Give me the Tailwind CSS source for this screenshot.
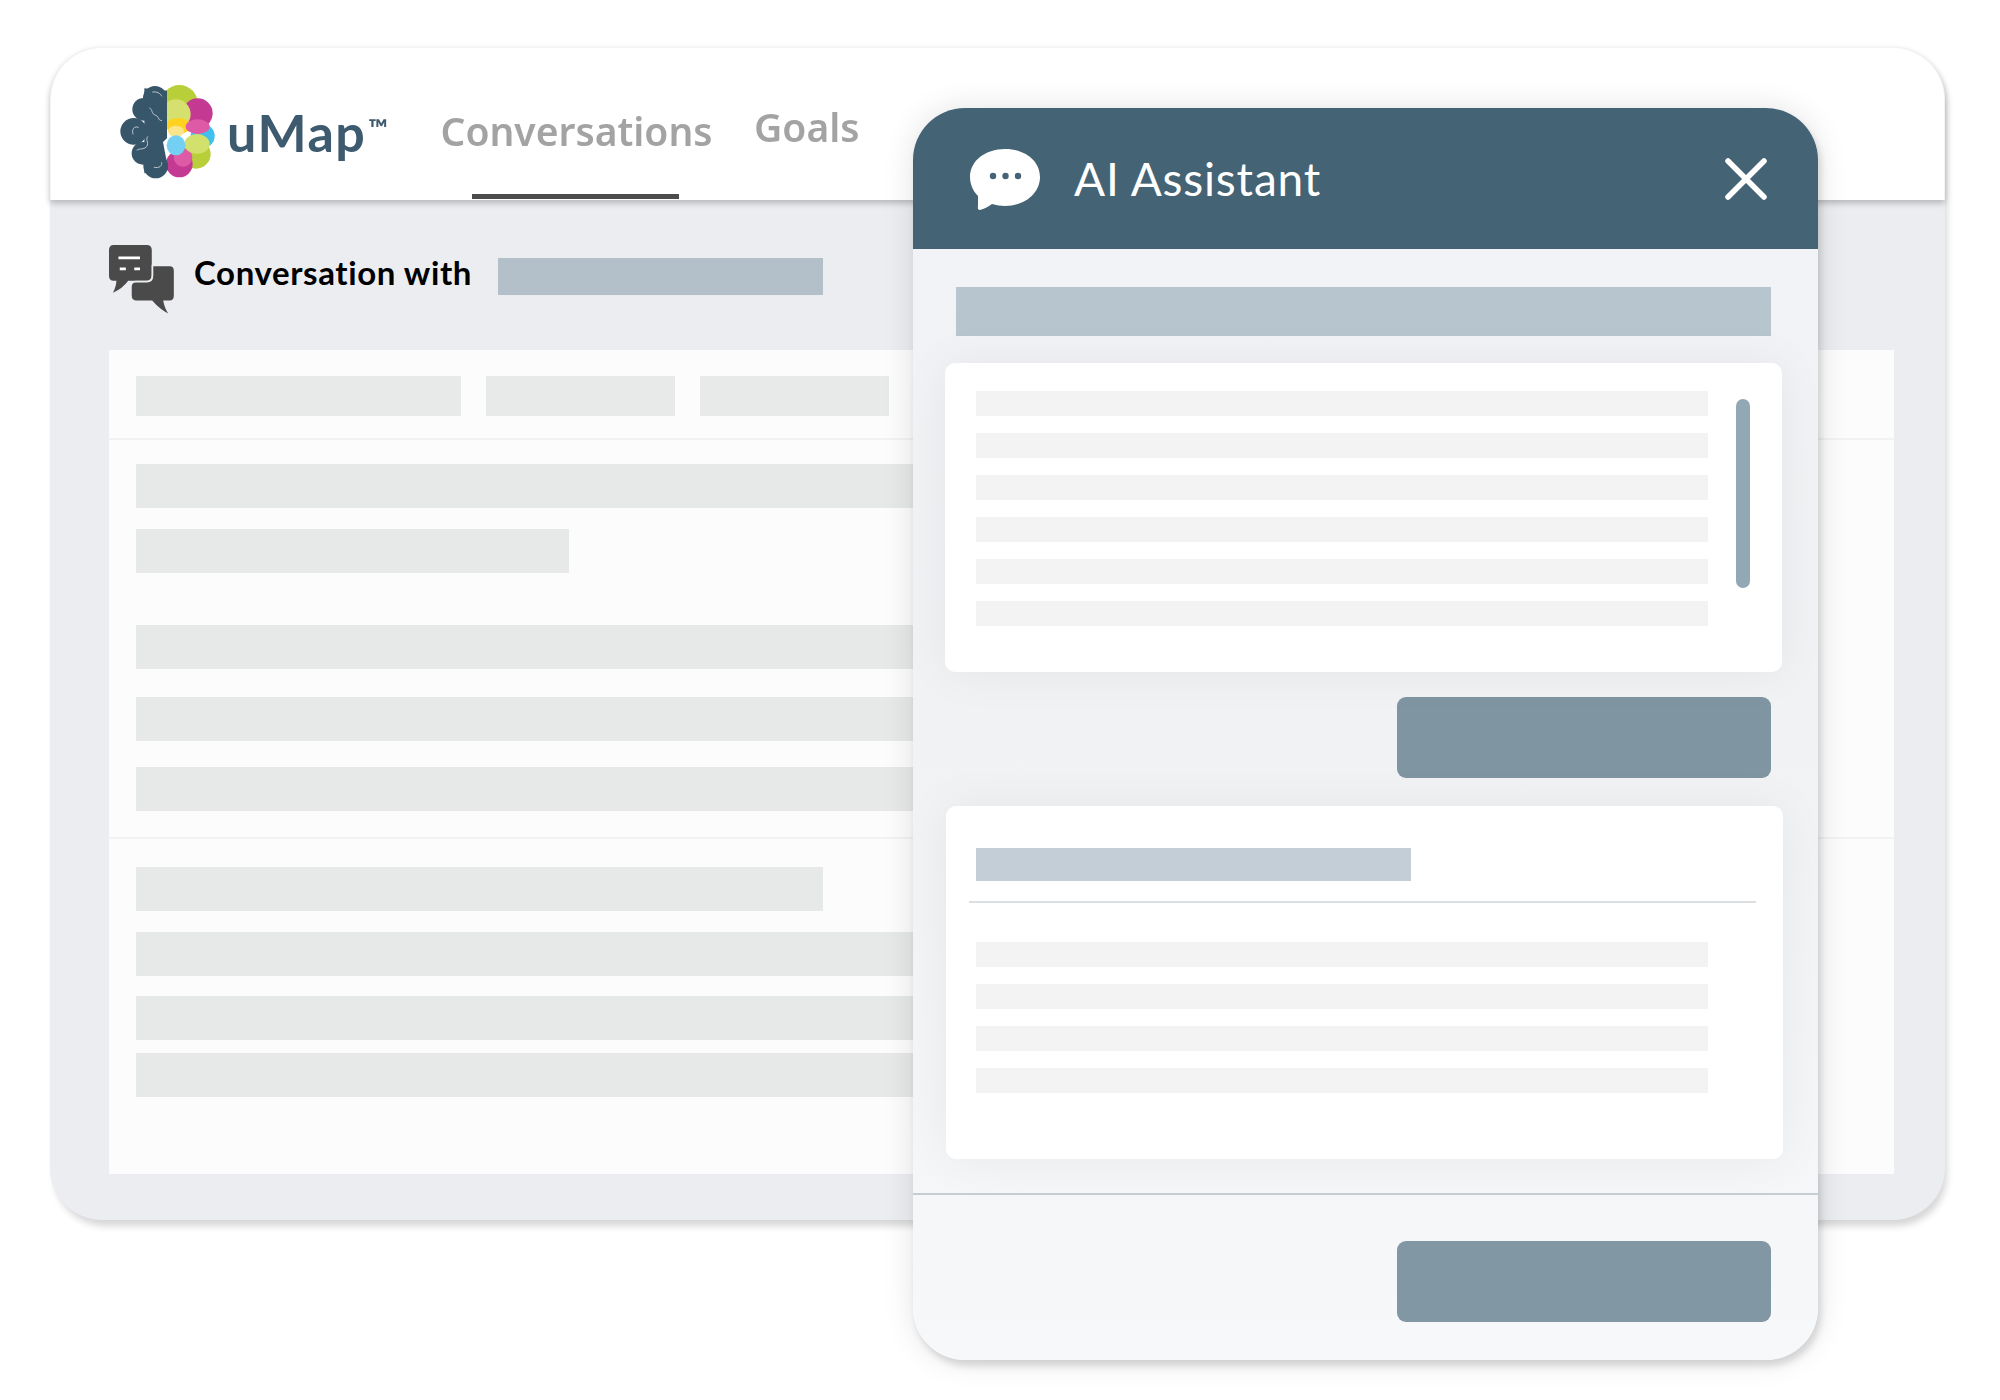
<!DOCTYPE html>
<html lang="en">
<head>
  <meta charset="UTF-8">
  <meta name="viewport" content="width=device-width, initial-scale=1.0">
  <title>uMap AI Assistant</title>
  <script src="https://cdn.jsdelivr.net/npm/@tailwindcss/browser@4"></script>
</head>
<body class="bg-white font-['Lato',sans-serif]">
  <div class="relative w-[2000px] h-[1400px] overflow-hidden bg-white pt-[47px] pl-[50px]">

    <!-- back window -->
    <div class="w-[1895px] h-[1173px] rounded-[52px] bg-[#ecedf1] shadow-[3px_7px_7px_-1px_rgba(0,0,0,0.16)] flex flex-col">
      <header class="h-[153px] shrink-0 bg-white rounded-t-[52px] border-t border-l border-r border-[#f4f4f8] shadow-[0_3px_6px_rgba(0,0,0,0.24)] flex items-start pl-[50px]">
        <svg class="mt-[22px] w-[120px] h-[120px] shrink-0 blur-[0.5px]" viewBox="0 0 360 360">
          <circle cx="235" cy="100" r="55" fill="#b8cf3a"/>
          <circle cx="290" cy="130" r="45" fill="#c43a93"/>
          <circle cx="225" cy="132" r="44" fill="#d5e06f"/>
          <ellipse cx="232" cy="168" rx="36" ry="24" fill="#ffd21f"/>
          <ellipse cx="225" cy="184" rx="24" ry="17" fill="#fbe58a"/>
          <circle cx="305" cy="198" r="36" fill="#3fc0ef"/>
          <ellipse cx="290" cy="170" rx="36" ry="22" fill="#df5aa6"/>
          <circle cx="285" cy="252" r="44" fill="#b8cf3a"/>
          <circle cx="235" cy="282" r="40" fill="#c43a93"/>
          <circle cx="246" cy="262" r="28" fill="#df5aa6"/>
          <ellipse cx="288" cy="222" rx="38" ry="30" fill="#d2e06c"/>
          <ellipse cx="225" cy="226" rx="28" ry="30" fill="#74d0f3"/>
          <g fill="#38566a">
            <circle cx="162" cy="84" r="36"/>
            <circle cx="128" cy="118" r="34"/>
            <circle cx="98" cy="184" r="40"/>
            <circle cx="126" cy="250" r="34"/>
            <circle cx="164" cy="288" r="37"/>
            <path d="M130 55 L198 62 L198 205 L186 216 L202 300 L130 310Z"/>
          </g>
          <path fill="none" stroke="#cfd9df" stroke-width="2.500" stroke-linecap="round" d="M155 66 C168 64 178 70 182 78 M146 114 C156 118 150 132 164 136 C176 140 168 150 182 152 M96 192 C90 178 102 166 112 172 M140 200 C130 210 150 222 132 234 C124 238 112 236 108 240 M160 292 C176 296 184 286 182 278"/>
        </svg>
        <div class="w-[170px] ml-[6px] mt-[52px] flex items-start text-[#3e5a6e] font-bold blur-[0.3px]">
          <span class="text-[52px] leading-[64px] tracking-[1.5px]">uMap</span>
          <span class="ml-[2px] mt-[-4px] text-[26px] leading-[64px]">™</span>
        </div>
        <nav class="flex items-start h-full ml-[45px] font-['Noto_Sans',sans-serif]">
          <div class="w-[269px] h-full flex flex-col items-center">
            <span class="mt-[59px] text-[39px] leading-[48px] font-semibold text-[#a3a3a3] whitespace-nowrap blur-[0.3px]">Conversations</span>
            <span class="mt-auto mb-[1px] self-start ml-[30px] w-[207px] h-[5px] bg-[#4c4c4c]"></span>
          </div>
          <span class="ml-[43px] mt-[55px] text-[39px] leading-[48px] font-semibold text-[#a3a3a3] blur-[0.3px]">Goals</span>
        </nav>
      </header>

      <div class="flex-1 pl-[59px] pr-[51px] pt-[45px] pb-[46px] flex flex-col">
        <div class="h-[105px] shrink-0 flex items-start">
          <svg class="w-[66px] h-[71px] shrink-0 overflow-visible" viewBox="28 30 196 208" preserveAspectRatio="none">
            <path fill="#4a4a4a" d="M42 30 H140 Q155 30 155 45 V118 Q155 135 138 135 H85 Q68 158 40 170 Q50 150 50 135 H42 Q28 135 28 120 V45 Q28 30 42 30Z"/>
            <path fill="#4a4a4a" stroke="#ecedf1" stroke-width="5" d="M157 90 H208 Q223 90 223 105 V178 Q223 195 208 195 H192 Q196 218 212 238 Q178 222 155 195 H110 Q93 195 93 178 V152 Q93 137 108 137 H140 Q157 137 157 120Z"/>
            <path fill="#fff" d="M56 64 H120 V72 H56Z M60 96 H78 V104 H60Z M103 96 H120 V104 H103Z"/>
          </svg>
          <span class="ml-[19px] mt-[5px] text-[33px] leading-[44px] tracking-[0.6px] font-bold text-black">Conversation with</span>
          <span class="ml-[26px] mt-[13px] w-[325px] h-[37px] bg-[#b3c0c9]"></span>
        </div>

        <div class="flex-1 bg-[#fbfcfb]">
          <div class="h-[90px] border-b-2 border-[#f1f3f2] pl-[27px] pt-[26px] flex gap-[25px]">
            <div class="w-[325px] h-[40px] bg-[#e8eae9]"></div>
            <div class="w-[189px] h-[40px] bg-[#e8eae9]"></div>
            <div class="w-[189px] h-[40px] bg-[#e8eae9]"></div>
          </div>
          <div class="h-[399px] border-b-2 border-[#f1f3f2] pl-[27px] pt-[24px]">
            <div class="w-[1600px] h-[44px] bg-[#e7e9e8]"></div>
            <div class="w-[433px] h-[44px] mt-[21px] bg-[#e7e9e8]"></div>
            <div class="w-[1600px] h-[44px] mt-[52px] bg-[#e7e9e8]"></div>
            <div class="w-[1600px] h-[44px] mt-[28px] bg-[#e7e9e8]"></div>
            <div class="w-[1600px] h-[44px] mt-[26px] bg-[#e7e9e8]"></div>
          </div>
          <div class="pl-[27px] pt-[28px]">
            <div class="w-[687px] h-[44px] bg-[#e7e9e8]"></div>
            <div class="w-[1600px] h-[44px] mt-[21px] bg-[#e7e9e8]"></div>
            <div class="w-[1600px] h-[44px] mt-[20px] bg-[#e7e9e8]"></div>
            <div class="w-[1600px] h-[44px] mt-[13px] bg-[#e7e9e8]"></div>
          </div>
        </div>
      </div>
    </div>

    <!-- AI assistant panel -->
    <div class="absolute left-[913px] top-[108px] w-[905px] h-[1252px] rounded-[52px] bg-gradient-to-b from-[#f2f3f6] via-[#f1f2f4] to-[#f7f8fa] shadow-[0_0_32px_rgba(0,0,0,0.11),3px_6px_7px_rgba(0,0,0,0.13)] flex flex-col">
      <div class="h-[141px] shrink-0 rounded-t-[52px] bg-[#446375] flex items-center pl-[56px] pr-[51px]">
        <svg class="w-[72px] h-[62px] shrink-0" viewBox="0 0 72 62">
          <path fill="#fff" d="M36 1 C56 1 71 13 71 29 C71 45 56 58 36 58 C32 58 27 57 23 56 C19 59 15 61 11 62 C8 62 9 59 9 57 L9 48 C4 43 1 36 1 29 C1 13 16 1 36 1Z"/>
          <circle cx="24" cy="28" r="3.2" fill="#446375"/>
          <circle cx="36.500" cy="28" r="3.2" fill="#446375"/>
          <circle cx="49" cy="28" r="3.2" fill="#446375"/>
        </svg>
        <span class="ml-[33px] text-[46px] leading-[60px] tracking-[0.8px] text-white">AI Assistant</span>
        <svg class="ml-auto w-[42px] h-[42px] shrink-0" viewBox="0 0 42 42">
          <path fill="none" stroke="#fff" stroke-width="5.500" stroke-linecap="round" d="M3 3 L39 39 M39 3 L3 39"/>
        </svg>
      </div>

      <div class="pt-[38px] pl-[43px]">
        <div class="w-[815px] h-[49px] bg-[#b7c6ce]"></div>
      </div>

      <div class="relative ml-[32px] mt-[27px] w-[837px] h-[309px] rounded-[10px] bg-white shadow-[0_0_50px_rgba(0,0,0,0.06)] pl-[31px] pt-[28px]">
        <div class="w-[732px] flex flex-col gap-[17px]">
          <div class="h-[25px] bg-[#f3f3f3]"></div>
          <div class="h-[25px] bg-[#f3f3f3]"></div>
          <div class="h-[25px] bg-[#f3f3f3]"></div>
          <div class="h-[25px] bg-[#f3f3f3]"></div>
          <div class="h-[25px] bg-[#f3f3f3]"></div>
          <div class="h-[25px] bg-[#f3f3f3]"></div>
        </div>
        <div class="absolute left-[791px] top-[36px] w-[14px] h-[189px] rounded-full bg-[#93a8b5]"></div>
      </div>

      <div class="flex justify-end mt-[25px] pr-[47px]">
        <div class="w-[374px] h-[81px] rounded-[9px] bg-[#7f95a2]"></div>
      </div>

      <div class="ml-[33px] mt-[28px] w-[837px] h-[353px] rounded-[10px] bg-white shadow-[0_0_50px_rgba(0,0,0,0.06)] pt-[42px]">
        <div class="ml-[30px] w-[435px] h-[33px] bg-[#c3ced6]"></div>
        <div class="ml-[23px] mr-[27px] mt-[20px] h-[2px] bg-[#dcdfe2]"></div>
        <div class="ml-[30px] w-[732px] mt-[39px] flex flex-col gap-[17px]">
          <div class="h-[25px] bg-[#f3f3f3]"></div>
          <div class="h-[25px] bg-[#f3f3f3]"></div>
          <div class="h-[25px] bg-[#f3f3f3]"></div>
          <div class="h-[25px] bg-[#f3f3f3]"></div>
        </div>
      </div>

      <div class="mt-[34px] h-[2px] bg-[#c5ccd3]"></div>
      <div class="flex justify-end mt-[46px] pr-[47px]">
        <div class="w-[374px] h-[81px] rounded-[9px] bg-[#8297a4]"></div>
      </div>
    </div>
  </div>
</body>
</html>
